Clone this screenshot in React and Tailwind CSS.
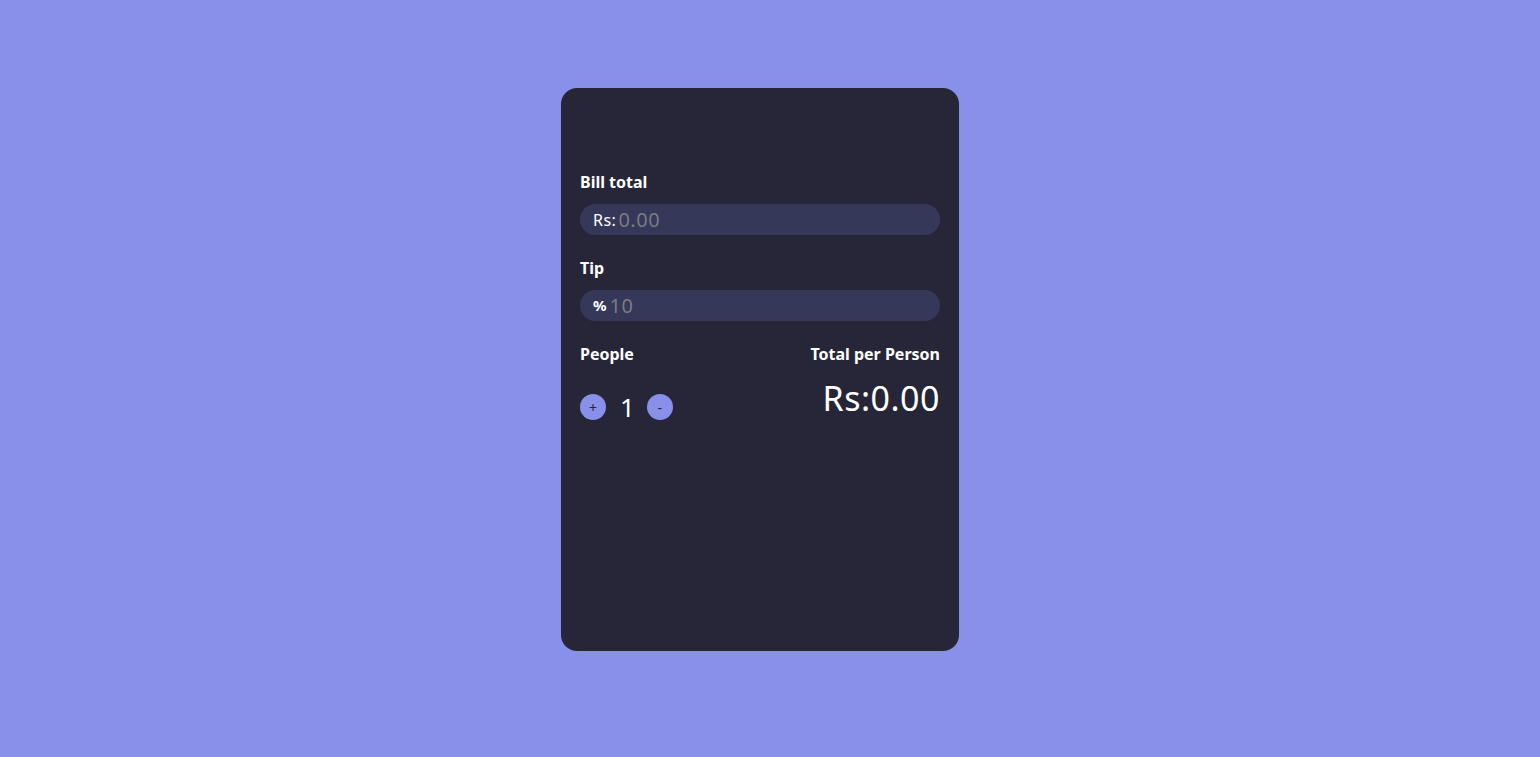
import React, { useState } from 'react';

const App = () => {
  const [people, setPeople] = useState(1);

  return (
    <div className="min-h-screen w-full bg-[#8990ea] flex justify-center pr-[20px] pt-[88px] font-['Noto_Sans',sans-serif]">
      <div className="w-[398px] h-[563px] bg-[#272639] rounded-2xl px-[19px] pt-[84px]">
        <label className="block text-white font-bold text-[16px] leading-5 mb-[12px]">Bill total</label>
        <div className="flex items-center h-[31px] rounded-full bg-[#353859] pl-[13px]">
          <span className="text-white text-[16px] tracking-[0.5px] mr-[2px]">Rs:</span>
          <input
            type="text"
            placeholder="0.00"
            className="bg-transparent outline-none text-[20px] tracking-[0.5px] text-white placeholder:text-[#7a7a85] w-full"
          />
        </div>

        <label className="block text-white font-bold text-[16px] leading-5 mt-[23px] mb-[12px]">Tip</label>
        <div className="flex items-center h-[31px] rounded-full bg-[#353859] pl-[13px]">
          <span className="text-white font-bold text-[15px] mr-[3px]">%</span>
          <input
            type="text"
            placeholder="10"
            className="bg-transparent outline-none text-[20px] tracking-[0.5px] text-white placeholder:text-[#7a7a85] w-full"
          />
        </div>

        <div className="flex justify-between mt-[23px]">
          <div>
            <div className="text-white font-bold text-[16px] leading-5">People</div>
            <div className="flex items-center mt-[30px]">
              <button
                onClick={() => setPeople(people + 1)}
                className="w-[26px] h-[26px] rounded-full bg-[#8990ea] text-[#272639] text-[14px] flex items-center justify-center"
              >
                +
              </button>
              <span className="text-white text-[26px] leading-none ml-[14px] mr-[12px]">{people}</span>
              <button
                onClick={() => setPeople(Math.max(1, people - 1))}
                className="w-[26px] h-[26px] rounded-full bg-[#8990ea] text-[#272639] text-[14px] flex items-center justify-center"
              >
                -
              </button>
            </div>
          </div>
          <div className="text-right">
            <div className="text-white font-bold text-[16px] leading-5">Total per Person</div>
            <div className="text-white text-[34px] tracking-[0.5px] leading-none mt-[17px]">Rs:0.00</div>
          </div>
        </div>
      </div>
    </div>
  );
};

export default App;
